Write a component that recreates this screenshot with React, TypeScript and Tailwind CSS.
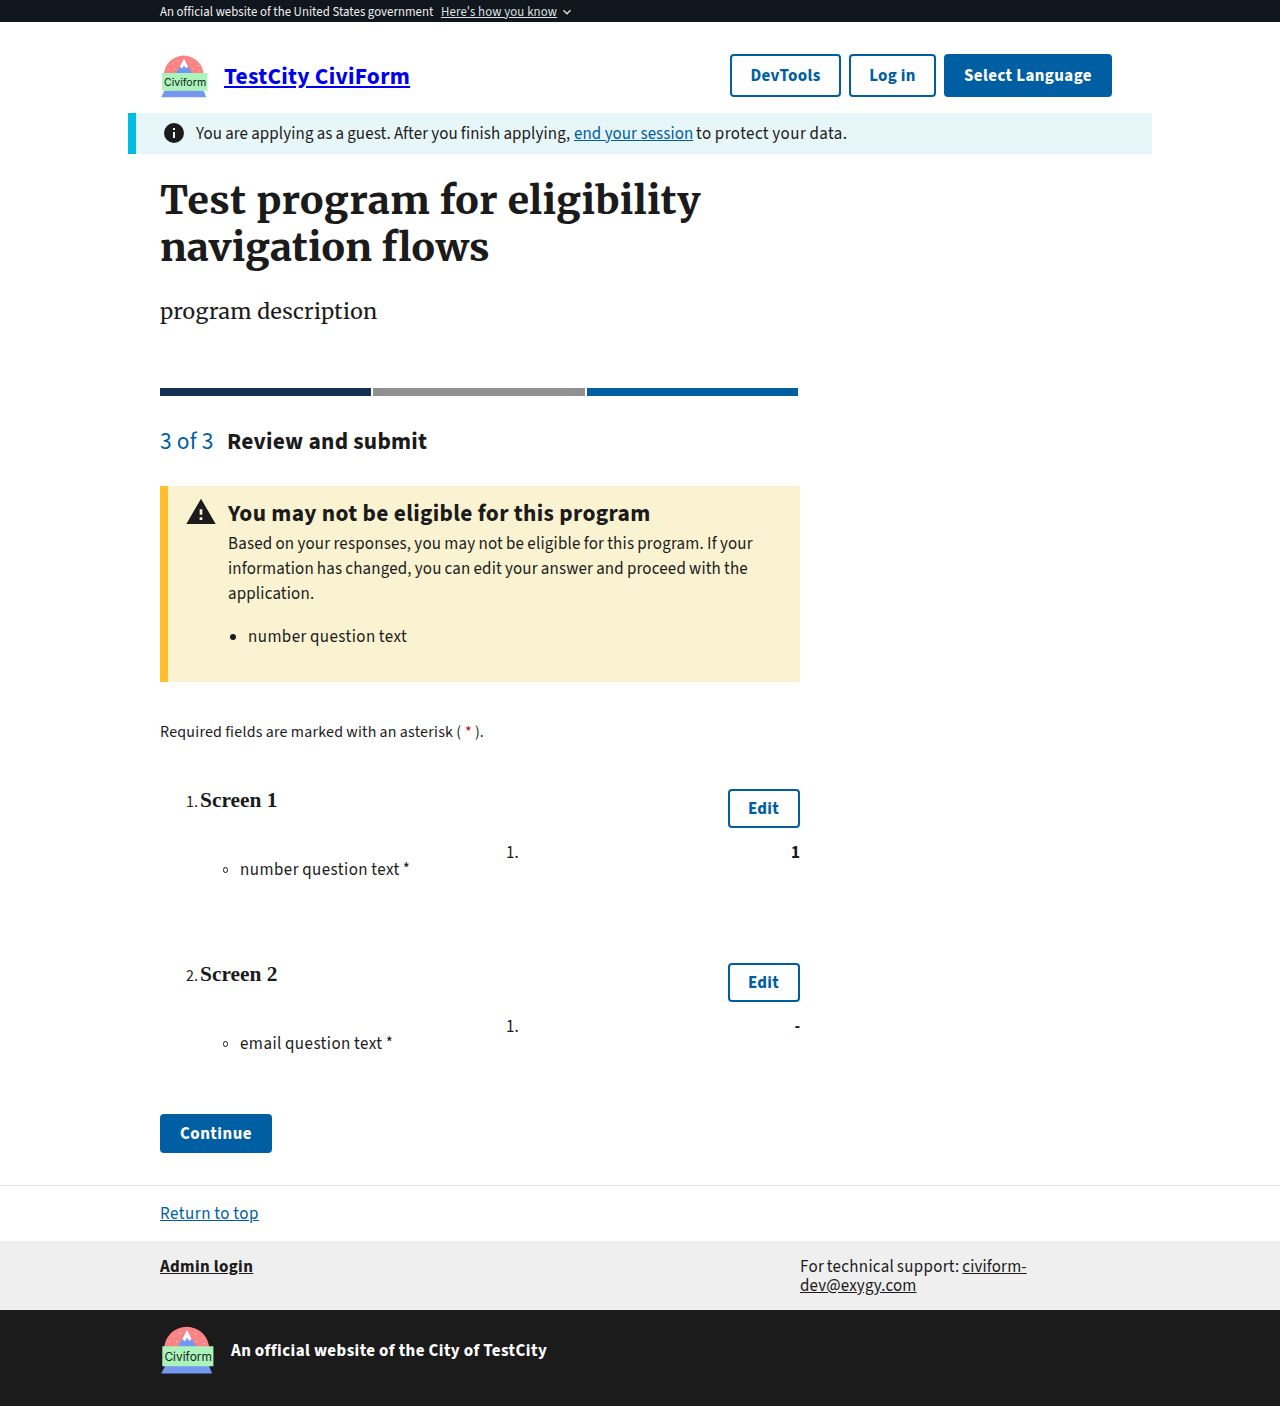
import type { ReactNode } from 'react';

function Logo({ className }: { className: string }) {
  return (
    <svg viewBox="5 6 54 48" className={className} aria-label="CiviForm logo">
      <circle cx="31.7" cy="29.2" r="22.5" fill="#fb8383" />
      <g fill="#fff" opacity=".75">
        <circle cx="25" cy="13" r=".7" />
        <circle cx="19.3" cy="16" r=".7" />
        <circle cx="21.5" cy="21.5" r=".7" />
        <circle cx="14.5" cy="21.8" r=".7" />
        <circle cx="41" cy="14" r=".7" />
        <circle cx="48" cy="18" r=".7" />
        <circle cx="42" cy="21.8" r=".7" />
        <circle cx="49" cy="23.5" r=".7" />
      </g>
      <path d="M32 10.5 41.5 27H22.5Z" fill="#7498f0" />
      <path d="M32 10 36.6 19.2 34.2 20.8 32 17.8 29.8 21.3 27.4 19Z" fill="#fff" />
      <path d="M10 46H54L57.2 53.6H6.2Z" fill="#7498f0" />
      <path d="M7.3 26.3H58.4V46.3H7.3Z" fill="#acf3bb" />
      <text x="9.4" y="41" fontFamily="Inter, sans-serif" fontSize="12.3" textLength="47.6" lengthAdjust="spacingAndGlyphs" fill="#10271a">
        Civiform
      </text>
    </svg>
  );
}

function OutlineButton({ className, children }: { className: string; children: ReactNode }) {
  return (
    <button className={`flex items-center justify-center rounded-[4px] border-2 border-[#005ea2] pt-[2px] font-bold whitespace-nowrap text-[#005ea2] ${className}`}>
      {children}
    </button>
  );
}

function ScreenSummary({ index, question, answer }: { index: number; question: string; answer: string }) {
  return (
    <li className="h-[174px]">
      <div className="flex h-[39px] items-start justify-between">
        <div className="flex items-baseline leading-[22px]">
          <span className="w-[40px] pr-[2px] text-right text-[16px]">{index}.</span>
          <h3 className="font-['Liberation_Serif',serif] text-[21.4px] font-bold">Screen {index}</h3>
        </div>
        <OutlineButton className="h-[39px] w-[72px] pr-px tracking-[0.3px]">Edit</OutlineButton>
      </div>
      <div className="flex pt-[13px]">
        <div className="flex w-[346px] items-center pt-[17px] pl-[62.5px] leading-[25px]">
          <span className="mb-px mr-[12px] size-[5.5px] rounded-full border border-[#1b1b1b]" />
          <span className="tracking-[0.47px] [word-spacing:-0.7px]">{question} *</span>
        </div>
        <div className="flex flex-1 justify-between leading-[25px]">
          <span>1.</span>
          <span className="font-bold">{answer}</span>
        </div>
      </div>
    </li>
  );
}

export default function App() {
  return (
    <div className="min-h-[1406px] bg-white font-['Source_Sans_3','Noto_Sans_CJK_JP',sans-serif] text-[16.96px] text-[#1b1b1b]">
      <div className="flex h-[22px] items-center bg-[#10161d] pt-[3px] pl-[160px] text-[12.8px] text-[#f0f0f0]">
        <span className="w-[281px] tracking-[0.03px] whitespace-nowrap">An official website of the United States government</span>
        <a className="tracking-[0.13px] whitespace-nowrap text-[#dfe1e2] underline">Here's how you know</a>
        <svg viewBox="0 0 24 24" className="mb-[2px] ml-[2px] size-4" fill="#dfe1e2">
          <path d="M16.59 8.59 12 13.17 7.41 8.59 6 10l6 6 6-6z" />
        </svg>
      </div>

      <header className="flex h-[91px] items-start justify-between pt-[32px] pr-[168px] pl-[160px]">
        <div className="flex h-[43px] items-center pt-[2px]">
          <Logo className="h-[42.6px] w-[48px]" />
          <a className="ml-4 text-[23.4px] font-bold tracking-[0.3px] whitespace-nowrap text-[#0000ee] underline">TestCity CiviForm</a>
        </div>
        <nav className="flex gap-2">
          <OutlineButton className="h-[43px] w-[111px] tracking-[0.35px]">DevTools</OutlineButton>
          <OutlineButton className="h-[43px] w-[87px] tracking-[0.3px]">Log in</OutlineButton>
          <OutlineButton className="h-[43px] w-[168px] bg-[#005ea2] tracking-[0.4px] !text-white">Select Language</OutlineButton>
        </nav>
      </header>

      <div className="mx-[128px] flex h-[41px] items-center border-l-8 border-[#00bde3] bg-[#e7f6f8] pl-[26px]">
        <svg viewBox="0 0 24 24" className="mr-[10px] mb-px size-6 shrink-0" fill="#1b1b1b">
          <path d="M12 2a10 10 0 1 0 0 20 10 10 0 0 0 0-20zm1 15h-2v-6h2v6zm0-8h-2V7h2v2z" />
        </svg>
        <p className="flex pt-[2px] whitespace-nowrap">
          <span className="w-[378px] tracking-[0.12px] [word-spacing:-0.5px]">You are applying as a guest. After you finish applying,</span>
          <a className="w-[122px] tracking-[0.06px] text-[#005ea2]"><span className="underline">end your session</span></a>
          <span className="tracking-[0.43px] [word-spacing:-0.5px]">to protect your data.</span>
        </p>
      </div>

      <main className="ml-[160px] w-[640px]">
        <h1 className="pt-[23px] font-['Merriweather','Noto_Serif',serif] text-[39px] leading-[47px] font-extrabold [font-stretch:104%]">
          <span className="block tracking-[0.47px]">Test program for eligibility</span>
          <span className="block tracking-[0.2px]">navigation flows</span>
        </h1>
        <p className="mt-[24px] font-['Merriweather','Noto_Serif',serif] text-[21.4px] leading-[34px] tracking-[0.28px]">program description</p>

        <div className="mt-[59px] flex h-2">
          <div className="mr-[2px] flex-1 bg-[#162e51]" />
          <div className="mr-[2px] flex-1 bg-[#919191]" />
          <div className="mr-[2px] flex-1 bg-[#005ea2]" />
        </div>

        <h2 className="mt-[28px] flex h-[34px] items-center pt-[2px] text-[23.4px]">
          <span className="w-[67px] tracking-[0.28px] text-[#005ea2]">3 of 3</span>
          <span className="font-bold tracking-[0.26px]">Review and submit</span>
        </h2>

        <section className="mt-[28px] flex h-[196px] border-l-8 border-[#ffbe2e] bg-[#faf3d1] pt-[10px] pl-[17px]">
          <svg viewBox="0 0 24 24" className="size-8 shrink-0" fill="#1b1b1b">
            <path d="M1 21h22L12 2 1 21zm12-3h-2v-2h2v2zm0-4h-2v-4h2v4z" />
          </svg>
          <div className="ml-[11px] whitespace-nowrap">
            <h3 className="h-[36px] text-[23.4px] leading-[35px] font-bold tracking-[0.33px]">You may not be eligible for this program</h3>
            <p className="leading-[25px] [word-spacing:-0.5px]">
              <span className="block tracking-[0.2px]">Based on your responses, you may not be eligible for this program. If your</span>
              <span className="block tracking-[0.17px]">information has changed, you can edit your answer and proceed with the</span>
              <span className="block tracking-[0.17px]">application.</span>
            </p>
            <div className="mt-[18px] flex items-center leading-[25px]">
              <span className="mr-[12px] mb-px ml-[2px] size-[6px] rounded-full bg-[#1b1b1b]" />
              <span className="tracking-[0.45px] [word-spacing:-0.7px]">number question text</span>
            </div>
          </div>
        </section>

        <p className="mt-[38px] flex leading-[24px] whitespace-nowrap text-[15.9px]">
          <span className="w-[305px] tracking-[0.25px] [word-spacing:-0.4px]">Required fields are marked with an asterisk (</span>
          <span className="w-[10px] text-[#b50909]">*</span>
          <span>).</span>
        </p>

        <ol className="mt-[45px]">
          <ScreenSummary index={1} question="number question text" answer="1" />
          <ScreenSummary index={2} question="email question text" answer="-" />
        </ol>

        <button className="mt-[-23px] flex h-[39px] w-[112px] items-center justify-center rounded-[4px] bg-[#005ea2] pt-[2px] font-bold tracking-[0.5px] text-white">
          Continue
        </button>
      </main>

      <footer className="mt-8">
        <div className="flex h-[56px] items-center border-t border-[#dfe1e2] pt-[2px] pl-[160px]">
          <a className="tracking-[0.55px] text-[#005ea2] underline [word-spacing:-0.8px]">Return to top</a>
        </div>
        <div className="flex h-[69px] bg-[#efefef] pt-[17px] pl-[160px] leading-[19px]">
          <div className="w-[640px]">
            <a className="font-bold tracking-[0.35px] underline">Admin login</a>
          </div>
          <p className="whitespace-nowrap">
            <span className="tracking-[0.3px] [word-spacing:-1px]">For technical support: </span>
            <a className="tracking-[0.15px] underline">
              civiform-
              <br />
              dev@exygy.com
            </a>
          </p>
        </div>
        <div className="flex h-[96px] items-start bg-[#1b1b1b] pt-4 pl-[160px]">
          <Logo className="h-[48px] w-[54px]" />
          <span className="ml-[17px] leading-[50px] font-bold tracking-[0.45px] whitespace-nowrap text-white [word-spacing:-0.3px]">
            An official website of the City of TestCity
          </span>
        </div>
      </footer>
    </div>
  );
}
